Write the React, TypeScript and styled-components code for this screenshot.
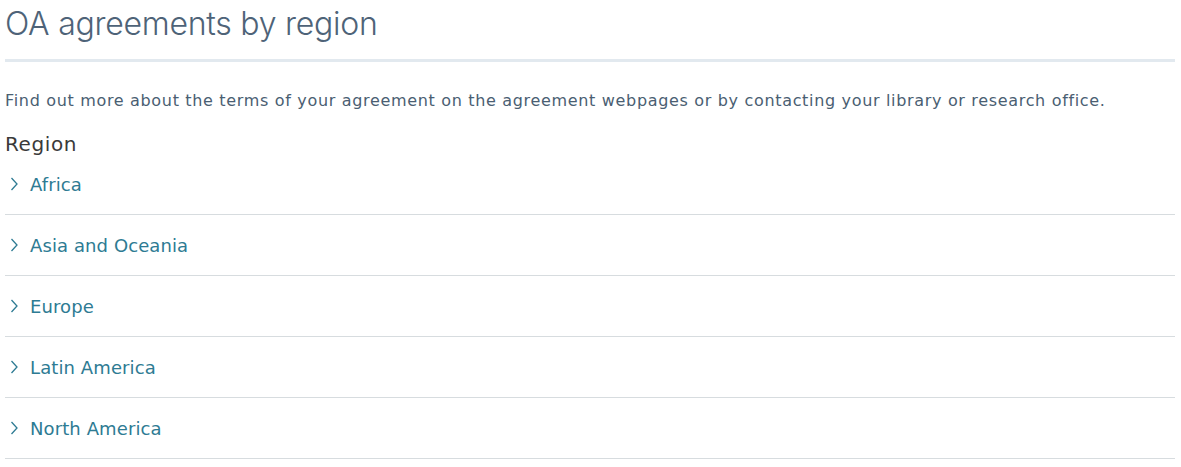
import { FC } from 'react';
import styled, { createGlobalStyle } from 'styled-components';

const GlobalStyle = createGlobalStyle`
  body {
    margin: 0;
    background: #ffffff;
    font-family: 'DejaVu Sans', 'Liberation Sans', sans-serif;
  }
`;

const Page = styled.main`
  padding: 4px 6px 0 5px;
`;

const Title = styled.h1`
  margin: 0;
  font-family: 'Inter', 'DejaVu Sans', sans-serif;
  font-size: 32px;
  font-weight: 300;
  line-height: 40px;
  letter-spacing: -0.25px;
  color: #4e6378;
  padding-bottom: 15px;
  border-bottom: 3px solid #e2e9ef;
`;

const Intro = styled.p`
  margin: 27px 0 0;
  font-size: 16px;
  line-height: 24px;
  letter-spacing: 0.67px;
  color: #4a5e72;
`;

const SectionHeading = styled.h2`
  margin: 21px 0 0;
  font-size: 20px;
  font-weight: 400;
  line-height: 20px;
  letter-spacing: 0.6px;
  color: #3a3a3a;
`;

const List = styled.ul`
  list-style: none;
  margin: 0;
  padding: 0;
`;

const Row = styled.li`
  box-sizing: border-box;
  display: flex;
  align-items: center;
  gap: 12px;
  height: 61px;
  padding-left: 5px;
  border-bottom: 1px solid #d7dcdf;
  color: #2e7b93;
  font-size: 18px;
  letter-spacing: 0.1px;
  cursor: pointer;
`;

const Chevron: FC = () => (
  <svg width="8" height="14" viewBox="0 0 8 14" fill="none">
    <path d="M1.5 1 L7 7 L1.5 13" stroke="#2e7b93" strokeWidth="1.3" />
  </svg>
);

const regions = ['Africa', 'Asia and Oceania', 'Europe', 'Latin America', 'North America'];

export default function App() {
  return (
    <>
      <GlobalStyle />
      <Page>
        <Title>OA agreements by region</Title>
        <Intro>
          Find out more about the terms of your agreement on the agreement webpages or by contacting your
          library or research office.
        </Intro>
        <SectionHeading>Region</SectionHeading>
        <List>
          {regions.map((r) => (
            <Row key={r}>
              <Chevron />
              <span>{r}</span>
            </Row>
          ))}
        </List>
      </Page>
    </>
  );
}
